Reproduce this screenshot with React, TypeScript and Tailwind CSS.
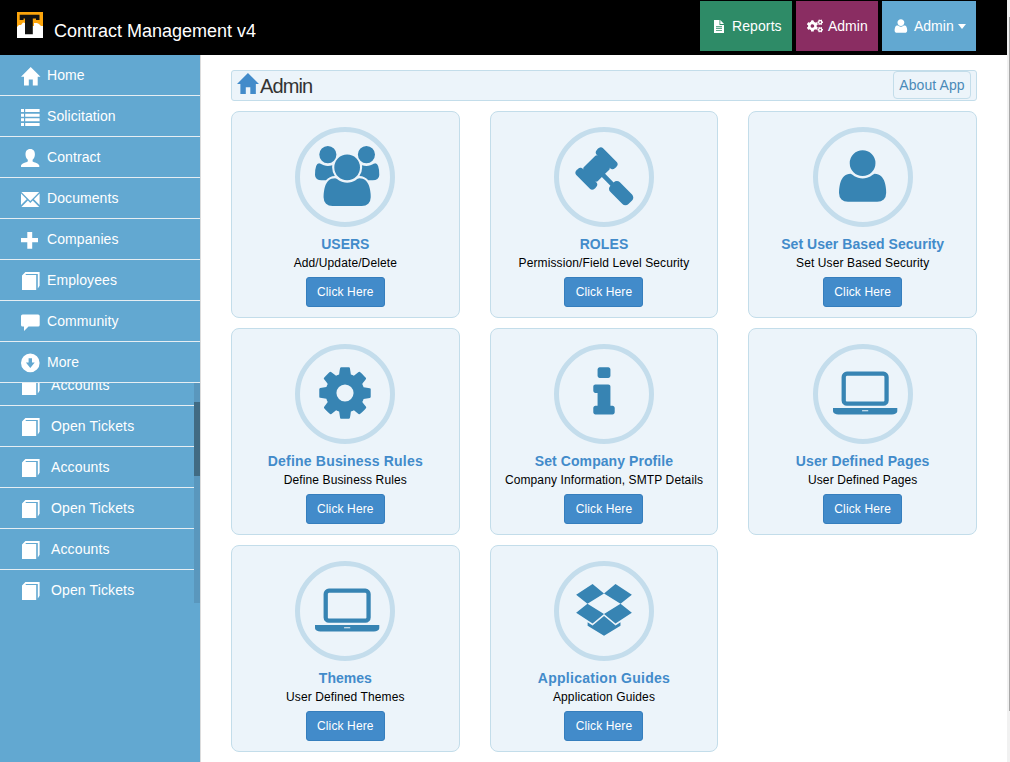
import type { ReactNode } from "react";
import { FaCogs } from "react-icons/fa";

const glyphs = {
  users:
    "M593 640q-162 -5 -265 -128h-134q-82 0 -138 40.5t-56 118.5q0 353 124 353q6 0 43.5 -21t97.5 -42.5t119 -21.5q67 0 133 23q-5 -37 -5 -66q0 -139 81 -256zM1664 3q0 -120 -73 -189.5t-194 -69.5h-874q-121 0 -194 69.5t-73 189.5q0 53 3.5 103.5t14 109t26.5 108.5t43 97.5t62 81t85.5 53.5t111.5 20q10 0 43 -21.5t73 -48t107 -48t135 -21.5t135 21.5t107 48t73 48t43 21.5q61 0 111.5 -20t85.5 -53.5t62 -81t43 -97.5t26.5 -108.5t14 -109t3.5 -103.5zM640 1280q0 -106 -75 -181t-181 -75t-181 75t-75 181t75 181t181 75t181 -75t75 -181zM1344 896q0 -159 -112.5 -271.5t-271.5 -112.5t-271.5 112.5t-112.5 271.5t112.5 271.5t271.5 112.5t271.5 -112.5t112.5 -271.5zM1920 671q0 -78 -56 -118.5t-138 -40.5h-134q-103 123 -265 128q81 117 81 256q0 29 -5 66q66 -23 133 -23q59 0 119 21.5t97.5 42.5t43.5 21q124 0 124 -353zM1792 1280q0 -106 -75 -181t-181 -75t-181 75t-75 181t75 181t181 75t181 -75t75 -181z",
  gavel:
    "M1771 0q0 -53 -37 -90l-107 -108q-39 -37 -91 -37q-53 0 -90 37l-363 364q-38 36 -38 90q0 53 43 96l-256 256l-126 -126q-14 -14 -34 -14t-34 14q2 -2 12.5 -12t12.5 -13t10 -11.5t10 -13.5t6 -13.5t5.5 -16.5t1.5 -18q0 -38 -28 -68q-3 -3 -16.5 -18t-19 -20.5t-18.5 -16.5t-22 -15.5t-22 -9t-26 -4.5q-40 0 -68 28l-408 408q-28 28 -28 68q0 13 4.5 26t9 22t15.5 22t16.5 18.5t20.5 19t18 16.5q30 28 68 28q10 0 18 -1.5t16.5 -5.5t13.5 -6t13.5 -10t11.5 -10t13 -12.5t12 -12.5q-14 14 -14 34t14 34l348 348q14 14 34 14t34 -14q-2 2 -12.5 12t-12.5 13t-10 11.5t-10 13.5t-6 13.5t-5.5 16.5t-1.5 18q0 38 28 68q3 3 16.5 18t19 20.5t18.5 16.5t22 15.5t22 9t26 4.5q40 0 68 -28l408 -408q28 -28 28 -68q0 -13 -4.5 -26t-9 -22t-15.5 -22t-16.5 -18.5t-20.5 -19t-18 -16.5q-30 -28 -68 -28q-10 0 -18 1.5t-16.5 5.5t-13.5 6t-13.5 10t-11.5 10t-13 12.5t-12 12.5q14 -14 14 -34t-14 -34l-126 -126l256 -256q43 43 96 43q52 0 91 -37l363 -363q37 -39 37 -91z",
  user:
    "M1408 131q0 -120 -73 -189.5t-194 -69.5h-874q-121 0 -194 69.5t-73 189.5q0 53 3.5 103.5t14 109t26.5 108.5t43 97.5t62 81t85.5 53.5t111.5 20q9 0 42 -21.5t74.5 -48t108 -48t133.5 -21.5t133.5 21.5t108 48t74.5 48t42 21.5q61 0 111.5 -20t85.5 -53.5t62 -81t43 -97.5t26.5 -108.5t14 -109t3.5 -103.5zM1088 1024q0 -159 -112.5 -271.5t-271.5 -112.5t-271.5 112.5t-112.5 271.5t112.5 271.5t271.5 112.5t271.5 -112.5t112.5 -271.5z",
  info:
    "M640 192v-128q0 -26 -19 -45t-45 -19h-512q-26 0 -45 19t-19 45v128q0 26 19 45t45 19h64v384h-64q-26 0 -45 19t-19 45v128q0 26 19 45t45 19h384q26 0 45 -19t19 -45v-576h64q26 0 45 -19t19 -45zM512 1344v-192q0 -26 -19 -45t-45 -19h-256q-26 0 -45 19t-19 45v192q0 26 19 45t45 19h256q26 0 45 -19t19 -45z",
  laptop:
    "M416 256q-66 0 -113 47t-47 113v704q0 66 47 113t113 47h1088q66 0 113 -47t47 -113v-704q0 -66 -47 -113t-113 -47h-1088zM384 1120v-704q0 -13 9.5 -22.5t22.5 -9.5h1088q13 0 22.5 9.5t9.5 22.5v704q0 13 -9.5 22.5t-22.5 9.5h-1088q-13 0 -22.5 -9.5t-9.5 -22.5zM1760 192h160v-96q0 -40 -47 -68t-113 -28h-1600q-66 0 -113 28t-47 68v96h160h1600zM1040 96q16 0 16 16t-16 16h-160q-16 0 -16 -16t16 -16h160z",
  dropbox:
    "M402 829l494 -305l-342 -285l-490 319zM1388 274v-108l-490 -293v-1l-1 1l-1 -1v1l-489 293v108l147 -96l342 284v2l1 -1l1 1v-2l343 -284zM554 1418l342 -285l-494 -304l-338 270zM1390 829l338 -271l-489 -319l-343 285zM1239 1418l489 -319l-338 -270l-494 304z",
};

const cogPath =
  "M1152 896q0-106-75-181t-181-75-181 75-75 181 75 181 181 75 181-75 75-181zm512-109v222q0 12-8 23t-20 13l-185 28q-19 54-39 91 35 50 107 138 10 12 10 25t-9 23q-27 37-99 108t-94 71q-12 0-26-9l-138-108q-44 23-91 38-16 136-29 186-7 28-36 28h-222q-14 0-24.5-8.5t-11.5-21.5l-28-184q-49-16-90-37l-141 107q-10 9-25 9-14 0-25-11-126-114-165-168-7-10-7-23 0-12 8-23 15-21 51-66.5t54-70.5q-27-50-41-99l-183-27q-13-2-21-12.5t-8-23.5v-222q0-12 8-23t19-13l186-28q14-46 39-92-40-57-107-138-10-12-10-24 0-10 9-23 26-36 98.5-107.5t94.5-71.5q13 0 26 10l138 107q44-23 91-38 16-136 29-186 7-28 36-28h222q14 0 24.5 8.5t11.5 21.5l28 184q49 16 90 37l142-107q9-9 24-9 13 0 25 10 129 119 165 170 7 8 7 22 0 12-8 23-15 21-51 66.5t-54 70.5q26 50 41 98l183 28q13 2 21 12.5t8 23.5z";

type CardIcon = keyof typeof glyphs | "cog";

// Left offset of each glyph inside its 1792-unit em square.
const offsets: Record<CardIcon, number> = {
  users: 0,
  gavel: 0,
  user: 180,
  info: 576,
  laptop: 0,
  dropbox: 0,
  cog: 0,
};

function Glyph({ name, className }: { name: CardIcon; className: string }) {
  return (
    <svg viewBox="0 0 1792 1792" className={`overflow-visible ${className}`} fill="currentColor">
      {name === "cog" ? (
        <path d={cogPath} />
      ) : (
        <path transform={`translate(${offsets[name]} 1536) scale(1 -1)`} d={glyphs[name]} />
      )}
    </svg>
  );
}

function HomeShape() {
  return <path d="M9.7 0 19.5 9.8H16.7V18.5H11.8V12.5H7.8V18.5H3V9.8H0Z" />;
}

const sideIcons: Record<string, ReactNode> = {
  home: <HomeShape />,
  list: (
    <path d="M0 1h3v3H0zM4.2 1H18.6v3H4.2zM0 5.7h3v3H0zM4.2 5.7H18.6v3H4.2zM0 10.3h3v3H0zM4.2 10.3H18.6v3H4.2zM0 15h3v3H0zM4.2 15H18.6v3H4.2z" />
  ),
  user: (
    <path d="M9.2 0C12.6 0 13.9 2.3 13.9 5.4 13.9 7.6 13 9.6 11.6 10.8V12.4C12.5 13.3 18.3 14.3 18.3 16.6V18H0V16.6C0 14.3 5.8 13.3 6.8 12.4V10.8C5.4 9.6 4.5 7.6 4.5 5.4 4.5 2.3 5.8 0 9.2 0Z" />
  ),
  envelope: (
    <path d="M.4 2H18.2L9.3 11.1ZM0 3.600 5.700 9.300 0 15.100ZM18.600 3.600V15.100L12.900 9.300ZM6.900 10.500 9.300 12.900 11.700 10.500 18.200 17H.4Z" />
  ),
  plus: <path d="M6.300 1h4.900v5.900h5.800v4.400h-5.800v6.400H6.300v-6.400H0V6.900h6.300z" />,
  book: <path d="M1 3.600 4.400 0H18.600V13.800L16.800 16.600V2H5L4.400 2.900H15.200V18H1Z" />,
  comment: (
    <path d="M1.600 1.500H17.100Q18.700 1.500 18.700 3.100V12Q18.700 13.600 17.100 13.600H7.500L3 18V13.600H1.600Q0 13.600 0 12V3.100Q0 1.500 1.600 1.500Z" />
  ),
  down: (
    <path
      fillRule="evenodd"
      d="M9.300 -.4A9.300 9.300 0 1 1 9.300 18.200 9.300 9.300 0 0 1 9.300 -.4ZM7.600 4.300V8.600H4.900L9.300 13.900 13.700 8.600H11V4.300Z"
    />
  ),
};

function SideIcon({ name }: { name: string }) {
  return (
    <svg viewBox="0 0 20 20" className="mt-1 h-5 w-5 shrink-0 overflow-visible" fill="currentColor">
      {sideIcons[name]}
    </svg>
  );
}

const menu = [
  ["home", "Home"],
  ["list", "Solicitation"],
  ["user", "Contract"],
  ["envelope", "Documents"],
  ["plus", "Companies"],
  ["book", "Employees"],
  ["comment", "Community"],
  ["down", "More"],
];

const subMenu = ["Accounts", "Open Tickets", "Accounts", "Open Tickets", "Accounts", "Open Tickets"];

const cards: { icon: CardIcon; title: string; text: string; tracking: string }[] = [
  { icon: "users", title: "USERS", text: "Add/Update/Delete", tracking: "tracking-normal" },
  { icon: "gavel", title: "ROLES", text: "Permission/Field Level Security", tracking: "tracking-[0.1px]" },
  { icon: "user", title: "Set User Based Security", text: "Set User Based Security", tracking: "tracking-[0.05px]" },
  { icon: "cog", title: "Define Business Rules", text: "Define Business Rules", tracking: "tracking-[0.2px]" },
  { icon: "info", title: "Set Company Profile", text: "Company Information, SMTP Details", tracking: "tracking-[0.07px]" },
  { icon: "laptop", title: "User Defined Pages", text: "User Defined Pages", tracking: "tracking-[0.12px]" },
  { icon: "laptop", title: "Themes", text: "User Defined Themes", tracking: "tracking-normal" },
  { icon: "dropbox", title: "Application Guides", text: "Application Guides", tracking: "tracking-[0.26px]" },
];

function Logo() {
  return (
    <svg viewBox="0 0 26 26" className="h-[26px] w-[26px]">
      <rect width="26" height="26" fill="#fff" />
      <path d="M0 0H26V14L24 14 22 12 20 11 17 11V14H8V11L6 10.500 4 13 2 13 0 15Z" fill="#fca50c" />
      <path d="M2.700 2.700H22.500V8H19V6.500H15.800V22.300H8V6.500H6.500V8H2.700Z" fill="#111" />
    </svg>
  );
}

function Header() {
  return (
    <header className="flex h-[55px] shrink-0 bg-black text-white">
      <div className="flex flex-1 pl-[17px] pt-3">
        <Logo />
        <h1 className="ml-[11px] mt-[5px] text-lg leading-7">Contract Management v4</h1>
      </div>
      <nav className="mr-[31px] mt-px flex h-[50px] gap-1 text-sm">
        <a className="flex w-[92px] items-center bg-[#2e8b67] pl-[14px] tracking-[0.1px]">
          <svg viewBox="0 0 10 12" preserveAspectRatio="none" className="mr-[8px] h-[13px] w-[10px]" fill="currentColor">
            <path
              fillRule="evenodd"
              d="M0 0H5.500V4.500H10V12H0ZM6.300 0 10 3.700H6.300ZM2 5.800V6.600H8V5.800ZM2 7.600V8.400H8V7.600ZM2 9.400V10.200H8V9.400Z"
            />
          </svg>
          Reports
        </a>
        <a className="flex w-[82px] items-center bg-[#8a2d62] pl-[11px]">
          <FaCogs className="mr-[5px] h-4 w-4" />
          Admin
        </a>
        <a className="flex w-[94px] items-center bg-[#62a8d1] pl-[11px]">
          <Glyph name="user" className="mr-[5px] h-4 w-4" />
          Admin
          <span className="ml-1 border-x-[4.500px] border-t-[5px] border-x-transparent border-t-white" />
        </a>
      </nav>
    </header>
  );
}

function Sidebar() {
  return (
    <aside className="w-[201px] shrink-0 border-r border-[#dcdcdc] bg-[#62a8d1] text-sm text-white">
      <ul>
        {menu.map(([icon, label]) => (
          <li key={label} className="flex h-[41px] items-center border-b border-[#e6eef3] pl-[21px]">
            <SideIcon name={icon} />
            <span className="ml-[6px] tracking-[0.08px]">{label}</span>
          </li>
        ))}
      </ul>
      <div className="flex h-[220px] overflow-hidden">
        <ul className="-mt-[18px] w-[194px]">
          {subMenu.map((label, i) => (
            <li
              key={i}
              className="flex h-[41px] items-center border-b border-[#e6eef3] pl-[21px] last:border-transparent"
            >
              <SideIcon name="book" />
              <span className="ml-[10px] tracking-[0.13px]">{label}</span>
            </li>
          ))}
        </ul>
        <div className="w-[6px] bg-[#5a97bd] pt-[19px]">
          <div className="h-[74px] bg-[#416b83]" />
        </div>
      </div>
    </aside>
  );
}

export default function App() {
  return (
    <div className="flex h-[762px] w-[1010px] overflow-hidden bg-white font-['Liberation_Sans',Arial,sans-serif]">
      <div className="flex w-[1007px] flex-col">
        <Header />
        <div className="flex flex-1">
          <Sidebar />
          <main className="w-[776px] pl-[30px] pt-[15px]">
            <div className="flex h-[31px] items-start rounded-[3px] border border-[#c3ddea] bg-[#ecf4fa] pl-[5px] pr-[5px]">
              <svg
                viewBox="0 0 19.5 18.5"
                preserveAspectRatio="none"
                className="mt-[2px] h-[21px] w-[22px] text-[#428bca]"
                fill="currentColor"
              >
                <HomeShape />
              </svg>
              <h2 className="ml-[1px] text-xl leading-[30px] tracking-[-0.900px] text-[#333]">Admin</h2>
              <a className="ml-auto flex h-7 w-[78px] items-center justify-center rounded border border-[#c3ddea] text-sm tracking-[0.1px] text-[#4a8ab8]">
                About App
              </a>
            </div>
            <div className="mt-[10px] grid grid-cols-3 gap-x-[30px] gap-y-[10px]">
              {cards.map((card) => (
                <section
                  key={card.title}
                  className="flex h-[207px] flex-col items-center rounded-[8px] border border-[#c3ddea] bg-[#ecf4fa] pt-[15px]"
                >
                  <div className="h-[100px] w-[100px] rounded-full border-[5px] border-[#c4ddec] pl-[15px] pt-[13.700px] text-[#3784b3]">
                    <Glyph name={card.icon} className="h-[60px] w-[60px]" />
                  </div>
                  <h3 className={`mt-[7px] text-sm font-bold leading-5 text-[#428bca] ${card.tracking}`}>
                    {card.title}
                  </h3>
                  <p className="mt-px text-xs leading-[17px] tracking-[0.11px] text-black">{card.text}</p>
                  <button className="mt-[5px] h-[30px] w-[79px] rounded-[3px] border border-[#357ebd] bg-[#428bca] text-xs tracking-[0.13px] text-white">
                    Click Here
                  </button>
                </section>
              ))}
            </div>
          </main>
        </div>
      </div>
      <div className="w-[3px] bg-[#f1f1f1] pl-[2px] pt-[17px]">
        <div className="h-[694px] bg-[#a8a8a8]" />
      </div>
    </div>
  );
}
